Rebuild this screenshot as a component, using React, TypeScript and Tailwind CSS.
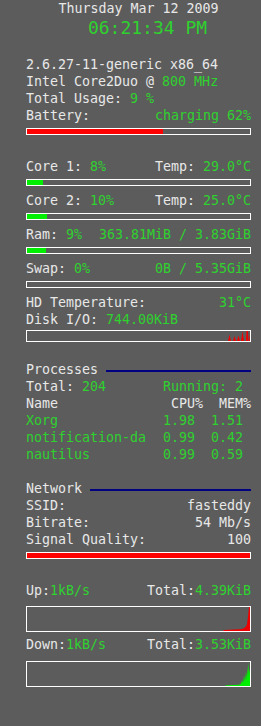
// Conky-style system monitor panel.

const G = "text-[#2fd12f]";

function Row({ left, right }: { left: React.ReactNode; right?: React.ReactNode }) {
  return (
    <div className="flex h-[17px] justify-between whitespace-pre">
      <span>{left}</span>
      {right !== undefined && <span>{right}</span>}
    </div>
  );
}

function Bar({ pct, color }: { pct: number; color: string }) {
  return (
    <div className="h-[17px] pt-[4px]">
      <div className="h-[7px] border border-white">
        <div className="h-full" style={{ width: `${pct}%`, background: color }} />
      </div>
    </div>
  );
}

function Heading({ title }: { title: string }) {
  return (
    <div className="flex h-[17px] items-center whitespace-pre">
      <span>{title} </span>
      <div className="mt-[2px] h-[2px] flex-1 bg-[#000080]" />
    </div>
  );
}

function Graph({ className, children }: { className: string; children: React.ReactNode }) {
  return (
    <div className={`border border-white ${className}`}>
      <svg width="100%" height="100%" viewBox="0 0 223 100" preserveAspectRatio="none" className="block">
        {children}
      </svg>
    </div>
  );
}

export default function App() {
  return (
    <div className="h-[726px] w-[261px] bg-[#5c5c5c] pl-[26px] pr-[10px] font-['DejaVu_Sans_Mono',monospace] text-[13.3px] leading-[17px] text-[#e8e8e8]">
      <div className="h-[17px] text-center">Thursday Mar 12 2009</div>
      <div className={`h-[22px] pl-[18px] text-center text-[18px] leading-[22px] ${G}`}>06:21:34 PM</div>
      <div className="h-[17px]" />

      <Row left="2.6.27-11-generic x86_64" />
      <Row left={<>Intel Core2Duo @ <span className={G}>800 MHz</span></>} />
      <Row left={<>Total Usage: <span className={G}>9 %</span></>} />
      <Row left="Battery:" right={<span className={G}>charging 62%</span>} />
      <Bar pct={61} color="#ff0000" />
      <div className="h-[17px]" />

      <Row left={<>Core 1: <span className={G}>8%</span></>} right={<>Temp: <span className={G}>29.0°C</span></>} />
      <Bar pct={7} color="#00ee00" />
      <Row left={<>Core 2: <span className={G}>10%</span></>} right={<>Temp: <span className={G}>25.0°C</span></>} />
      <Bar pct={9} color="#00ee00" />
      <Row left={<>Ram: <span className={G}>9%</span></>} right={<span className={G}>363.81MiB / 3.83GiB</span>} />
      <Bar pct={8.5} color="#00ee00" />
      <Row left={<>Swap: <span className={G}>0%</span></>} right={<span className={G}>0B / 5.35GiB</span>} />
      <Bar pct={0} color="#00ee00" />
      <Row left="HD Temperature:" right={<span className={G}>31°C</span>} />
      <Row left={<>Disk I/O: <span className={G}>744.00KiB</span></>} />
      <Graph className="mt-[2px] mb-[19px] h-[12px]">
        <polygon points="201,100 202.5,35 204,100 206,100 207.5,50 209,100 210,100 211.5,45 213,100 214,100 215.5,0 217,100 219,100 219.5,0 221,0 221.5,100 222,100 222.5,20 223,100" fill="#ee0000" />
      </Graph>

      <Heading title="Processes" />
      <Row left={<>Total: <span className={G}>204</span></>} right={<span className={G}>Running: 2 </span>} />
      <Row left="Name" right="CPU%  MEM%" />
      <div className={G}>
        <Row left="Xorg" right=" 1.98  1.51 " />
        <Row left="notification-da" right=" 0.99  0.42 " />
        <Row left="nautilus" right=" 0.99  0.59 " />
      </div>
      <div className="h-[17px]" />

      <Heading title="Network" />
      <Row left="SSID:" right="fasteddy" />
      <Row left="Bitrate:" right="54 Mb/s" />
      <Row left="Signal Quality:" right="100" />
      <Bar pct={100} color="#ff0000" />
      <div className="h-[17px]" />

      <Row left={<>Up:<span className={G}>1kB/s</span></>} right={<>Total:<span className={G}>4.39KiB</span></>} />
      <Graph className="mt-[7px] mb-[4px] h-[26px]">
        <path d="M196,100 L197,96 L212,93 Q218,90 219,80 L220,72 L221,40 L222,0 L223,0 L223,100 Z" fill="#ee0000" />
      </Graph>
      <Row left={<>Down:<span className={G}>1kB/s</span></>} right={<>Total:<span className={G}>3.53KiB</span></>} />
      <Graph className="mt-[8px] h-[26px]">
        <path d="M198,100 L199,97 L212,95 L214,90 L215,75 L216,88 L217,55 L218,80 L219,40 L219.6,70 L220.3,20 L221,60 L221.6,0 L222.3,45 L223,30 L223,100 Z" fill="#00ee00" />
      </Graph>
    </div>
  );
}
